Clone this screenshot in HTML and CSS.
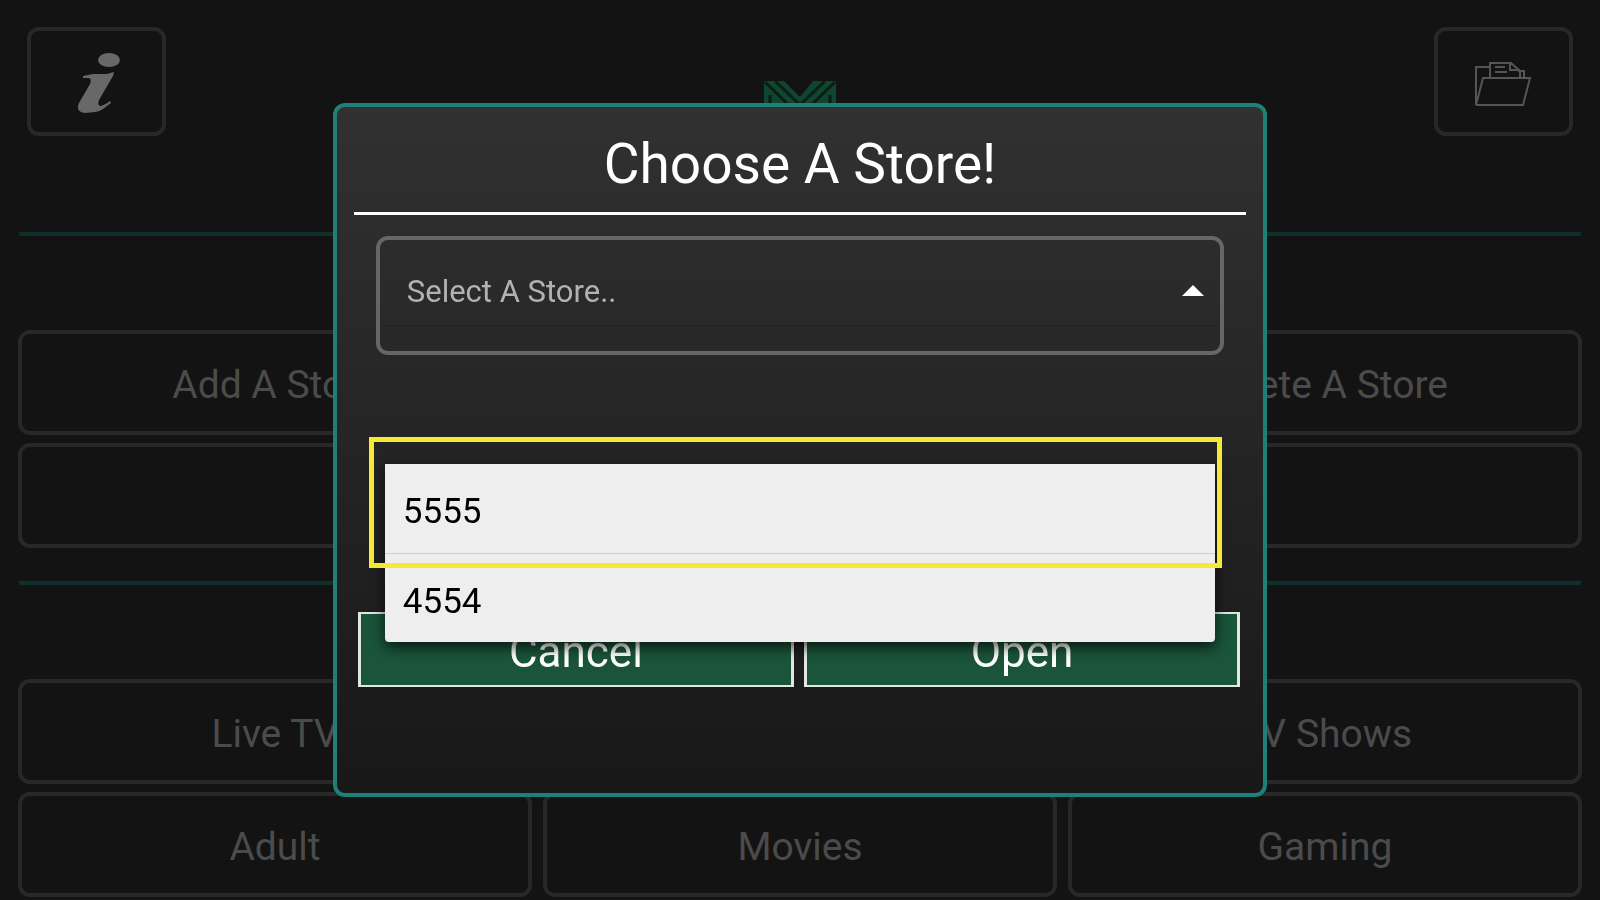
FILE: index.html
```html
<!DOCTYPE html>
<html lang="en">
<head>
<meta charset="utf-8">
<meta name="viewport" content="width=device-width, initial-scale=1">
<title>Choose A Store!</title>
<link rel="stylesheet" href="styles.css">
</head>
<body>
<main class="home">
  <header class="topbar">
    <button class="tile tile-icon" type="button">
      <svg class="icon" viewBox="1 0 100 80" aria-hidden="true">
        <g fill="#686868">
          <ellipse cx="63" cy="18" rx="11" ry="7"/>
          <path d="M37 34 47 32 61 32 68 30 67 34 53 58Q51 64 55 64 59 63 64 59L65 61 57 67Q53 70 49 70L39 71Q31 70 32 64L33 61 44 42Q46 37 43 36L37 36Z"/>
        </g>
      </svg>
    </button>
    <svg class="logo" viewBox="0 0 72 124" aria-hidden="true">
      <path fill="#0f4630" d="M0 0H20L36 16 49 0H72V124H0Z"/>
      <path fill="none" stroke="#0b1d16" stroke-width="3" d="M11 0 36 24 61 0M1 1 36 35 71 1M6 14V124M66 14V124"/>
    </svg>
    <button class="tile tile-icon" type="button">
      <svg class="icon" viewBox="2 -1 100 80" aria-hidden="true">
        <g fill="none" stroke="#555" stroke-width="2">
          <path d="M38 24H24V62L31 35H78L71 62H24"/>
          <path d="M38 35V20H59L68 28V35M58 20V27H67M66 28H72V35M43 24H53M43 29H55"/>
        </g>
      </svg>
    </button>
  </header>
  <hr class="rule">
  <section class="tiles">
    <button class="tile" type="button">Add A Store</button>
    <button class="tile tile-last" type="button">Delete A Store</button>
    <button class="tile tile-wide" type="button"></button>
  </section>
  <hr class="rule">
  <section class="tiles">
    <button class="tile" type="button">Live TV</button>
    <button class="tile tile-last" type="button">TV Shows</button>
    <button class="tile" type="button">Adult</button>
    <button class="tile" type="button">Movies</button>
    <button class="tile" type="button">Gaming</button>
  </section>
</main>

<div class="overlay">
  <section class="dialog" role="dialog" aria-modal="true" aria-labelledby="dialog-title">
    <h1 class="dialog-title" id="dialog-title">Choose A Store!</h1>
    <div class="picker">
      <div class="field">
        <select class="select" aria-labelledby="dialog-title">
          <option>Select A Store..</option>
          <option>5555</option>
          <option>4554</option>
        </select>
        <svg class="caret" viewBox="0 0 22 11" aria-hidden="true"><path fill="#fff" d="M11 0 22 11H0Z"/></svg>
      </div>
      <div class="menu" role="listbox" aria-labelledby="dialog-title">
        <button class="menu-item" type="button" role="option">5555</button>
        <button class="menu-item" type="button" role="option">4554</button>
      </div>
      <div class="highlight"></div>
    </div>
    <div class="actions">
      <button class="action" type="button">Cancel</button>
      <button class="action" type="button">Open</button>
    </div>
  </section>
</div>
</body>
</html>
```

FILE: styles.css
```css
* {
  box-sizing: border-box;
}

body {
  margin: 0;
  background: #131313;
  color: #fff;
  font-family: Roboto, "Liberation Sans", sans-serif;
}

button,
select {
  margin: 0;
  font-family: inherit;
}

.topbar {
  display: flex;
  justify-content: space-between;
  align-items: flex-start;
  padding: 27px;
}

.tile {
  height: 105px;
  padding: 4px 0 0;
  border: 4px solid #282828;
  border-radius: 12px;
  background: #131313;
  color: #4b4b4b;
  font-size: 39px;
}

.tile-icon {
  display: flex;
  align-items: center;
  justify-content: center;
  width: 139px;
  height: 109px;
  padding: 0;
}

.icon {
  width: 100px;
  height: 80px;
}

.logo {
  width: 72px;
  height: 124px;
  margin-top: 54px;
}

.rule {
  height: 4px;
  margin: 0 19px;
  border: 0;
  background: #0f2f2d;
}

.tiles {
  display: grid;
  grid-template-columns: repeat(3, 1fr);
  gap: 8px 11px;
  padding: 94px 18px 33px;
}

.tiles:last-child {
  padding-bottom: 2px;
}

.tile-last {
  grid-column: 3;
}

.tile-wide {
  grid-column: 1 / -1;
}

.overlay {
  position: fixed;
  inset: 0;
  display: grid;
  place-items: center;
}

.dialog {
  width: 58.4%;
  padding: 0 17px 106px;
  border: 4px solid #1f7f79;
  border-radius: 12px;
  background: linear-gradient(#313131, #181818);
}

.dialog-title {
  margin: 0;
  padding: 24px 0 15px;
  border-bottom: 3px solid #fff;
  font-size: 55px;
  font-weight: 400;
  line-height: 66px;
  text-align: center;
}

.picker {
  position: relative;
  margin: 21px 22px 0;
}

.field {
  position: relative;
  height: 119px;
  padding: 4px;
  border: 4px solid #666;
  border-radius: 12px;
}

.select {
  width: 100%;
  height: 82px;
  padding: 14px 23px 0;
  border: 0;
  border-bottom: 1px solid #202020;
  outline: 0;
  background: transparent;
  color: #b2b2b2;
  font-size: 31px;
  appearance: none;
}

.caret {
  position: absolute;
  top: 45px;
  right: 16px;
  width: 22px;
  height: 11px;
  pointer-events: none;
}

.menu {
  position: absolute;
  top: 228px;
  right: 9px;
  left: 9px;
  border-radius: 0 0 4px 4px;
  background: #eee;
  box-shadow: 0 5px 14px rgba(0, 0, 0, 0.7);
}

.menu-item {
  display: block;
  width: 100%;
  height: 89px;
  padding: 6px 18px 0;
  border: 0;
  background: transparent;
  color: #000;
  font-size: 35px;
  text-align: left;
}

.menu-item + .menu-item {
  border-top: 1px solid #ccc;
}

.highlight {
  position: absolute;
  top: 201px;
  right: 2px;
  left: -7px;
  height: 131px;
  border: 5px solid #f5ea32;
  pointer-events: none;
}

.actions {
  display: grid;
  grid-template-columns: 1fr 1fr;
  gap: 10px;
  margin: 257px 6px 0 4px;
}

.action {
  height: 75px;
  padding: 5px 0 0;
  border: solid #dfe8e3;
  border-width: 2px 3px;
  background: #1a5439;
  color: #fff;
  font-size: 44px;
  line-height: 52px;
}
```
